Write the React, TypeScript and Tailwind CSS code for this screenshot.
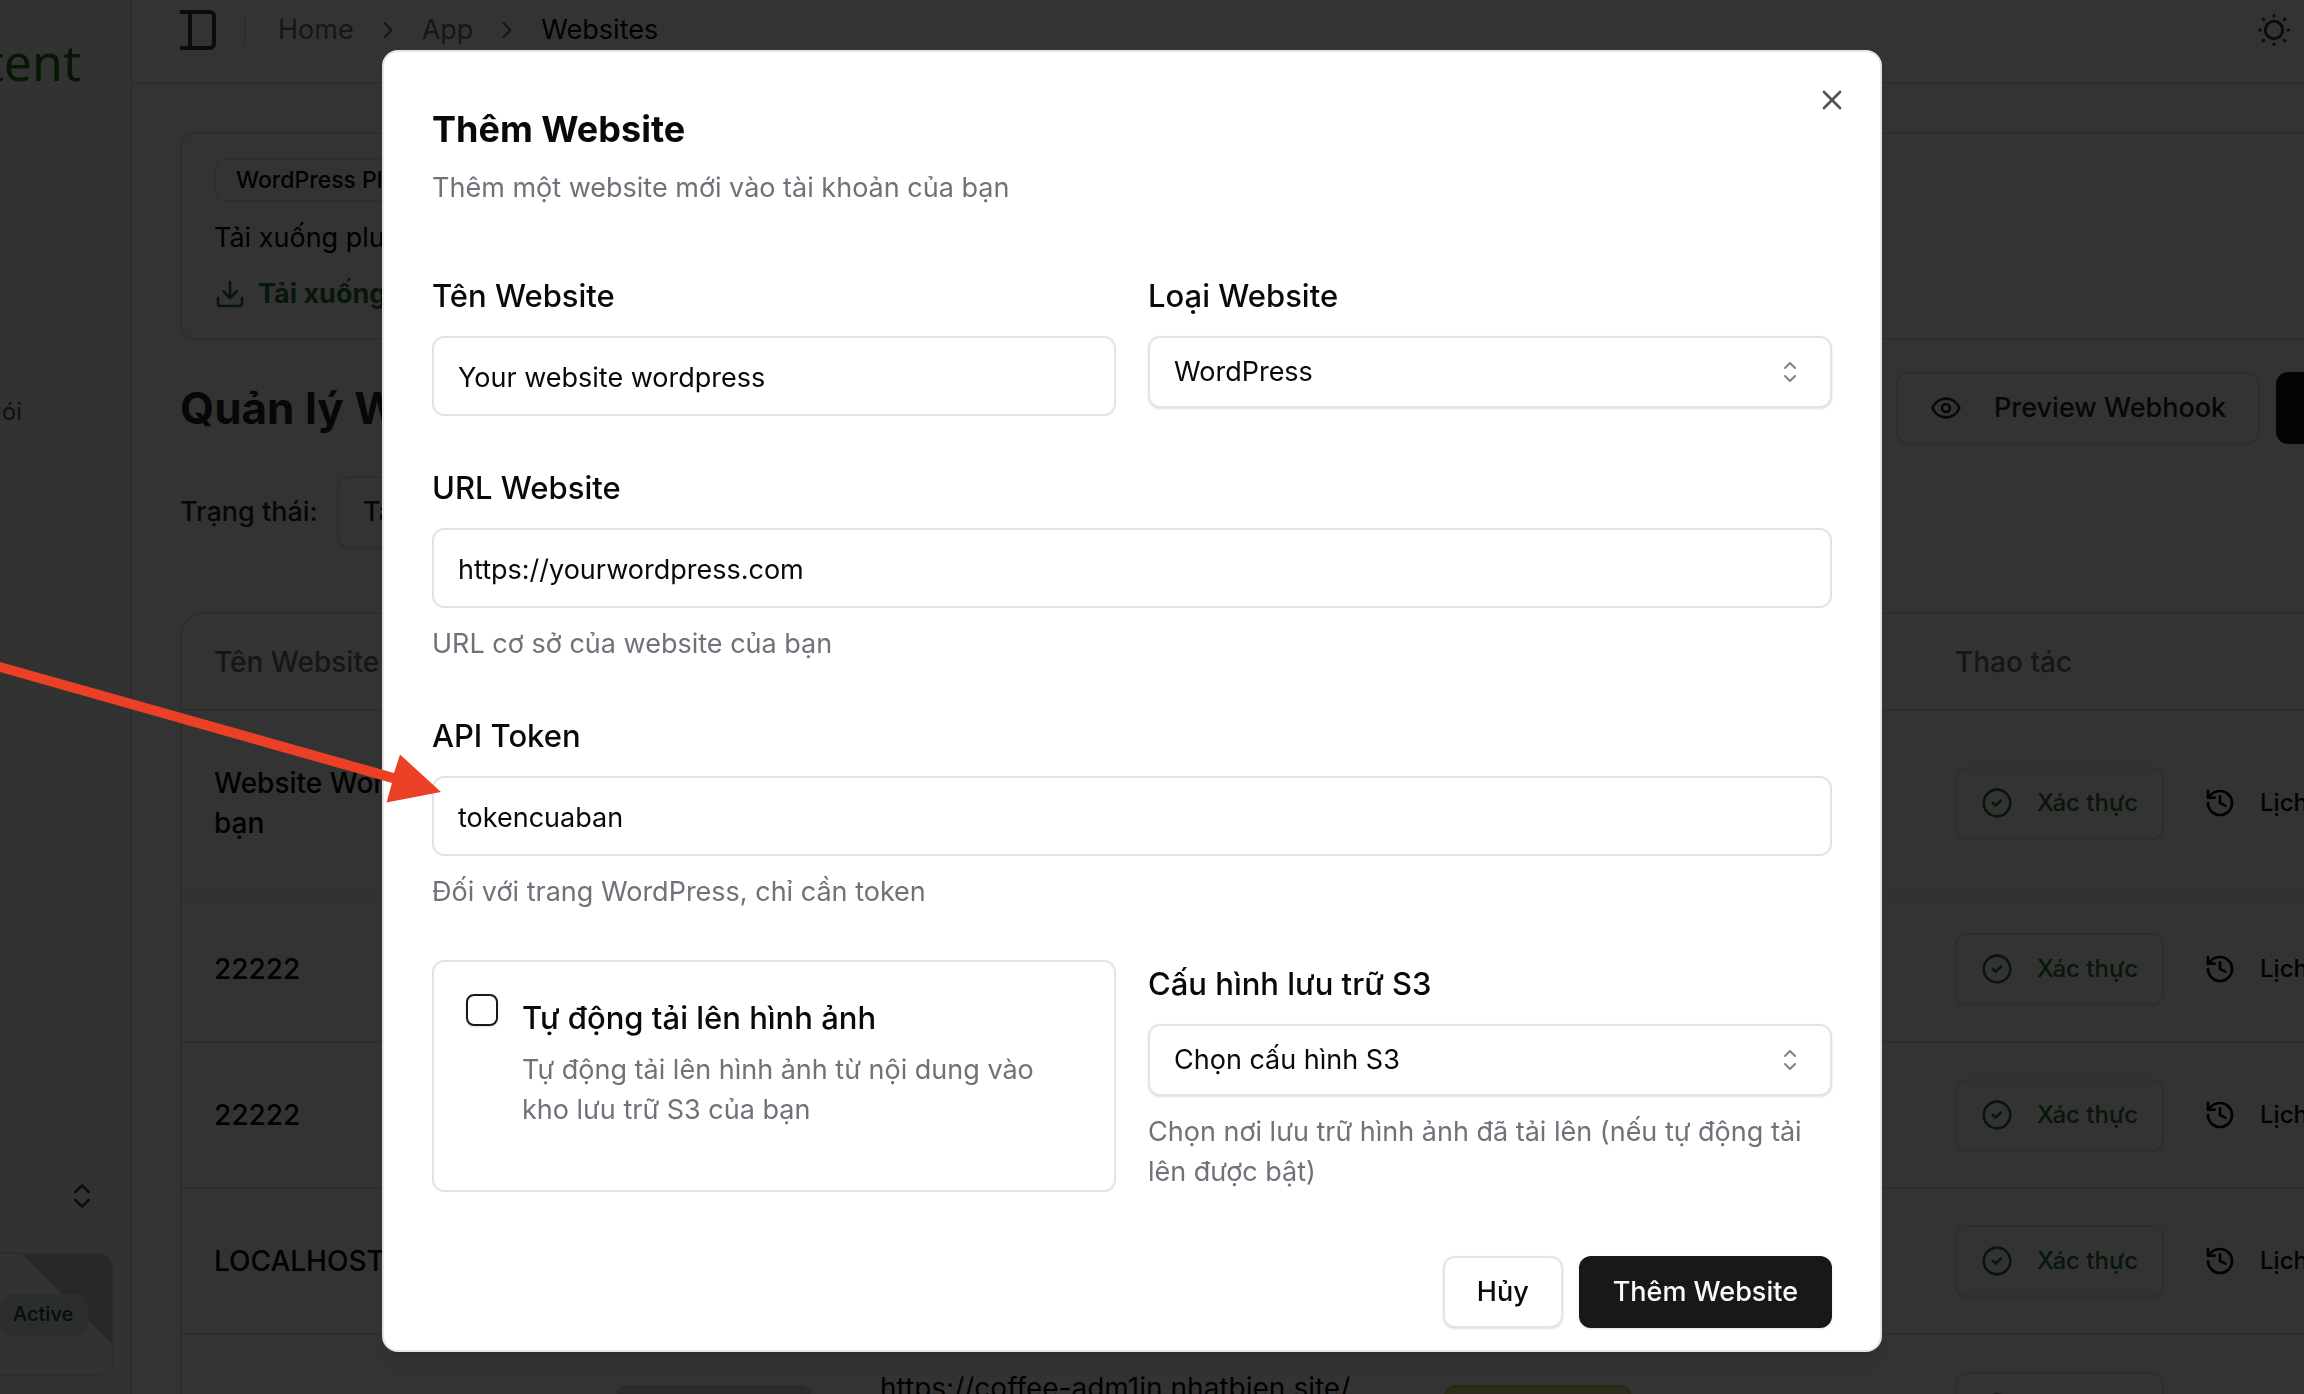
import {
  ChevronRight,
  ChevronsUpDown,
  CircleCheck,
  Download,
  Eye,
  History,
  X,
} from "lucide-react";
import { ReactNode, useState } from "react";

const websites = [
  { name: "Website WordPress của bạn", url: "", rowClass: "h-[186px]" },
  { name: "22222", url: "", rowClass: "h-[146px]" },
  { name: "22222", url: "", rowClass: "h-[146px]" },
  { name: "LOCALHOST", url: "", rowClass: "h-[146px]" },
  { name: "", url: "https://coffee-adm1in.nhatbien.site/ wp-json", rowClass: "h-[148px]" },
];

const outlineButton =
  "flex h-[72px] shrink-0 items-center rounded-xl border-2 border-[#e4e4e7] bg-white font-medium shadow-sm";

function SunIcon() {
  return (
    <svg width="32" height="32" viewBox="0 0 32 32" fill="none" stroke="currentColor" strokeWidth="3" strokeLinecap="round">
      <circle cx="16" cy="16" r="8.7" />
      <path d="M16 1.5v.6M16 29.900v.6M1.500 16h.6M29.900 16h.6M5.200 5.200l.6.6M26.200 26.200l.6.6M5.200 26.800l.6-.6M26.200 5.800l.6-.6" />
    </svg>
  );
}

function SidebarIcon() {
  return (
    <svg width="36" height="40" viewBox="0 0 36 40" fill="none" stroke="currentColor" strokeWidth="4">
      <path d="M0 2h30a4 4 0 0 1 4 4v28a4 4 0 0 1-4 4H0M10 2v36" />
    </svg>
  );
}

function SortIcon() {
  return (
    <svg width="32" height="32" viewBox="0 0 32 32" fill="none" stroke="currentColor" strokeWidth="2" strokeLinecap="round" strokeLinejoin="round" className="text-[#848485]">
      <path d="M11 12l5-5 5 5M11 20l5 5 5-5" />
    </svg>
  );
}

function Sidebar() {
  return (
    <aside className="flex w-[132px] shrink-0 flex-col overflow-hidden border-r-2 border-[#e4e4e7] bg-[#fafafa]">
      <div className="flex h-[92px] w-[81px] shrink-0 items-end justify-end font-['Noto_Sans',sans-serif] text-[50px] leading-[60px] text-[#267518] whitespace-nowrap">
        Content
      </div>
      <nav className="flex flex-col pt-[300px] text-2xl leading-10 text-[#52525b]">
        <a href="#goi" className="flex w-[22px] justify-end whitespace-nowrap">Mua gói</a>
        <a href="#websites" aria-label="Websites" className="mt-[188px] h-16 w-[115px] rounded-r-xl bg-[#f4f4f5]" />
      </nav>
      <div className="mt-[496px] flex h-8 w-[98px] justify-end text-[#3f3f46]">
        <ChevronsUpDown size={32} />
      </div>
      <div className="relative mt-10 flex h-[124px] w-[114px] shrink-0 items-center overflow-hidden rounded-r-2xl border-2 border-l-0 border-[#e0e0e2] bg-[#fafafa]">
        <svg className="absolute top-0 right-0" width="90" height="90" viewBox="0 0 90 90" aria-hidden="true">
          <path d="M0 0h90v90z" fill="#c8c8c8" />
        </svg>
        <span className="relative flex h-10 w-[88px] items-center rounded-xl bg-[#d8e6da] pl-[13px] text-xl font-medium text-[#174f1e] shadow-sm">
          Active
        </span>
      </div>
    </aside>
  );
}

function Page() {
  return (
    <div className="flex h-screen overflow-hidden bg-white" aria-hidden="true">
      <Sidebar />
      <div className="flex min-w-0 flex-1 flex-col">
        <header className="flex h-[84px] shrink-0 items-start justify-between border-b-2 border-[#e4e4e7] pl-12">
          <div className="flex h-[60px] items-center text-[27px] text-[#71717a]">
            <button type="button" aria-label="Toggle sidebar" className="text-[#3f3f46]">
              <SidebarIcon />
            </button>
            <div className="ml-7 h-8 w-0.5 bg-[#e4e4e7]" />
            <nav className="ml-8 flex items-center gap-5">
              <a href="#home">Home</a>
              <ChevronRight size={28} />
              <a href="#app">App</a>
              <ChevronRight size={28} />
              <span className="text-[#09090b]">Websites</span>
            </nav>
          </div>
          <button type="button" aria-label="Theme" className="mt-3.5 mr-3.5 text-[#3f3f46]">
            <SunIcon />
          </button>
        </header>

        <main className="flex flex-col pt-12 pl-12">
          <section className="flex h-[208px] w-[2400px] flex-col items-start rounded-2xl border-2 border-[#e4e4e7] px-8 pt-6">
            <span className="flex h-11 items-center rounded-xl border-2 border-[#e4e4e7] px-5 text-[23px] font-medium text-[#09090b]">
              WordPress Plugin
            </span>
            <p className="mt-4 text-[27px] leading-10">Tải xuống plugin</p>
            <a href="#download" className="mt-4 flex items-center gap-3 text-[27px] leading-10 font-bold text-[#27732f]">
              <Download size={32} />
              Tải xuống
            </a>
          </section>

          <div className="mt-8 flex h-[72px] items-center justify-between">
            <h1 className="text-[44px] font-bold text-[#27272a] whitespace-nowrap">Quản lý Website</h1>
            <div className="flex w-[408px] shrink-0 gap-4 text-[27px] text-[#27272a]">
              <button type="button" className={`${outlineButton} gap-8 px-8 whitespace-nowrap`}>
                <Eye size={32} />
                Preview Webhook
              </button>
              <button type="button" aria-label="Thêm Website" className="h-[72px] w-[240px] shrink-0 rounded-xl bg-[#18181b]" />
            </div>
          </div>

          <div className="mt-8 flex items-center gap-4 text-[27px] text-[#27272a]">
            <span className="w-[141px] font-medium whitespace-nowrap">Trạng thái:</span>
            <button type="button" className={`${outlineButton} w-[300px] justify-between px-6`}>
              Tất cả
            </button>
          </div>

          <div className="mt-16 w-[2400px] shrink-0 rounded-3xl border-2 border-[#e4e4e7]">
            <table className="w-full table-fixed text-left text-[28px] leading-10 text-[#09090b]">
              <thead>
                <tr className="h-24 border-b-2 border-[#e4e4e7] text-[#71717a]">
                  <th className="w-[402px] px-8 font-medium">Tên Website</th>
                  <th className="w-[264px] px-8" />
                  <th className="w-[564px] px-8" />
                  <th className="w-[511px] px-8" />
                  <th className="px-8 font-medium">Thao tác</th>
                </tr>
              </thead>
              <tbody>
                {websites.map((site, index) => (
                  <tr key={index} className={`${site.rowClass} border-b-2 border-[#e4e4e7]`}>
                    <td className="px-8 font-medium">
                      <div className="w-[330px]">{site.name}</div>
                    </td>
                    <td className="px-8">
                      <div className="h-[46px] w-[196px] rounded-xl bg-[#d4d4d8]" />
                    </td>
                    <td className="px-8">
                      <div className="w-[480px]">{site.url}</div>
                    </td>
                    <td className="px-8">
                      <div className="h-[46px] w-[188px] rounded-xl border-2 border-[#d0ca50] bg-[#dcd88c]" />
                    </td>
                    <td className="px-8">
                      <div className="flex gap-4 text-2xl font-medium">
                        <button type="button" className={`${outlineButton} gap-6 px-6 text-[#27732f]`}>
                          <CircleCheck size={32} />
                          Xác thực
                        </button>
                        <button type="button" className="flex h-[72px] items-center gap-6 px-6 whitespace-nowrap">
                          <History size={32} />
                          Lịch sử
                        </button>
                      </div>
                    </td>
                  </tr>
                ))}
              </tbody>
            </table>
          </div>
        </main>
      </div>
    </div>
  );
}

type FieldProps = {
  id: string;
  label: string;
  help?: string;
  children: ReactNode;
};

function Field({ id, label, help, children }: FieldProps) {
  return (
    <div className="flex flex-col gap-4">
      <label htmlFor={id} className="text-[31px] leading-[48px] font-medium">
        {label}
      </label>
      {children}
      {help && <p className="text-[27px] leading-10 text-[#71717a]">{help}</p>}
    </div>
  );
}

function TextInput({ id, value, onChange }: { id: string; value: string; onChange: (value: string) => void }) {
  return (
    <input
      id={id}
      type="text"
      value={value}
      onChange={(e) => onChange(e.target.value)}
      className="h-20 w-full rounded-xl border-2 border-[#e4e4e7] px-6 pt-0.5 text-[27px] outline-none"
    />
  );
}

function SelectInput({ id, options }: { id: string; options: string[] }) {
  return (
    <div className="relative">
      <select
        id={id}
        className="h-[72px] w-full appearance-none rounded-xl border-2 border-[#e4e4e7] bg-white px-6 text-[27px] shadow-sm outline-none"
      >
        {options.map((option) => (
          <option key={option}>{option}</option>
        ))}
      </select>
      <div className="pointer-events-none absolute inset-y-0 right-[26px] flex items-center">
        <SortIcon />
      </div>
    </div>
  );
}

function AddWebsiteDialog() {
  const [name, setName] = useState("Your website wordpress");
  const [url, setUrl] = useState("https://yourwordpress.com");
  const [token, setToken] = useState("tokencuaban");
  const [autoUpload, setAutoUpload] = useState(false);

  return (
    <div
      role="dialog"
      aria-labelledby="dialog-title"
      className="relative w-full max-w-[1500px] rounded-2xl border-2 border-[#e4e4e7] bg-white px-12 pt-12 pb-[22px] text-[#09090b] shadow-xl"
    >
      <button type="button" aria-label="Đóng" className="absolute top-8 right-8 text-[#525254]">
        <X size={32} strokeWidth={2} />
      </button>

      <h2 id="dialog-title" className="text-[36px] leading-[58px] font-bold">Thêm Website</h2>
      <p className="mt-2.5 text-[27px] leading-10 text-[#71717a]">Thêm một website mới vào tài khoản của bạn</p>

      <form className="mt-16 flex flex-col gap-12" onSubmit={(e) => e.preventDefault()}>
        <div className="grid grid-cols-2 items-start gap-8">
          <Field id="name" label="Tên Website">
            <TextInput id="name" value={name} onChange={setName} />
          </Field>
          <Field id="type" label="Loại Website">
            <SelectInput id="type" options={["WordPress", "Webhook"]} />
          </Field>
        </div>

        <Field id="url" label="URL Website" help="URL cơ sở của website của bạn">
          <TextInput id="url" value={url} onChange={setUrl} />
        </Field>

        <Field id="token" label="API Token" help="Đối với trang WordPress, chỉ cần token">
          <TextInput id="token" value={token} onChange={setToken} />
        </Field>

        <div className="grid grid-cols-2 gap-8">
          <div className="flex items-start gap-6 rounded-xl border-2 border-[#e4e4e7] p-8">
            <input
              id="auto-upload"
              type="checkbox"
              checked={autoUpload}
              onChange={(e) => setAutoUpload(e.target.checked)}
              className="size-8 shrink-0 appearance-none rounded-lg border-2 border-[#18181b] shadow-sm checked:bg-[#18181b]"
            />
            <div className="flex flex-col gap-2">
              <label htmlFor="auto-upload" className="text-[31px] leading-[48px] font-medium">
                Tự động tải lên hình ảnh
              </label>
              <p className="text-[27px] leading-10 text-[#71717a]">
                Tự động tải lên hình ảnh từ nội dung vào kho lưu trữ S3 của bạn
              </p>
            </div>
          </div>
          <Field
            id="s3"
            label="Cấu hình lưu trữ S3"
            help="Chọn nơi lưu trữ hình ảnh đã tải lên (nếu tự động tải lên được bật)"
          >
            <SelectInput id="s3" options={["Chọn cấu hình S3"]} />
          </Field>
        </div>

        <div className="mt-4 flex justify-end gap-4 text-[27px]">
          <button type="button" className={`${outlineButton} px-8`}>
            Hủy
          </button>
          <button type="submit" className="h-[72px] rounded-xl bg-[#18181b] px-[34px] font-medium text-[#fafafa] shadow">
            Thêm Website
          </button>
        </div>
      </form>
    </div>
  );
}

export default function App() {
  return (
    <div className="relative h-screen overflow-hidden font-[Inter,'Noto_Sans',sans-serif]">
      <Page />
      <div className="fixed inset-0 flex items-start justify-center bg-black/80 pt-[50px] pr-10">
        <AddWebsiteDialog />
      </div>
      {/* arrow pointing at the token field */}
      <svg className="pointer-events-none fixed top-[650px] left-0" width="450" height="170" viewBox="0 0 450 170" fill="#eb4026" aria-hidden="true">
        <path d="M0 12l394 111 6-18.500L441 142l-54.500 10.500 5.500-19.500L0 22z" />
      </svg>
    </div>
  );
}
